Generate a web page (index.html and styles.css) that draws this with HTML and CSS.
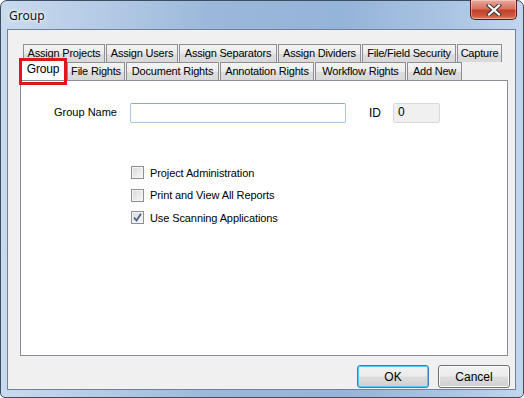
FILE: index.html
```html
<!DOCTYPE html>
<html lang="en">
<head>
    <meta charset="UTF-8">
    <title>Group</title>
    <link rel="stylesheet" href="styles.css">
</head>
<body>
    <!-- Dialog window -->
    <div class="window">
        <div class="titlebar">
            <span class="title">Group</span>
            <div class="close-btn">
                <svg width="16" height="12" viewBox="0 0 16 12">
                    <path d="M3 1.5 L13 10.5 M13 1.5 L3 10.5" stroke="#3b3b3b" stroke-width="4.2" stroke-linecap="square"/>
                    <path d="M3 1.5 L13 10.5 M13 1.5 L3 10.5" stroke="#ffffff" stroke-width="2.2" stroke-linecap="square"/>
                </svg>
            </div>
        </div>

        <div class="client">
            <!-- Tab control -->
            <div class="tab-control">
                <div class="tab-row back-row">
                    <span class="tab tab-projects">Assign Projects</span>
                    <span class="tab tab-users">Assign Users</span>
                    <span class="tab tab-separators">Assign Separators</span>
                    <span class="tab tab-dividers">Assign Dividers</span>
                    <span class="tab tab-security">File/Field Security</span>
                    <span class="tab tab-capture">Capture</span>
                </div>
                <div class="tab-row front-row">
                    <span class="tab selected">Group<span class="highlight"></span></span>
                    <span class="tab tab-file">File Rights</span>
                    <span class="tab tab-document">Document Rights</span>
                    <span class="tab tab-annotation">Annotation Rights</span>
                    <span class="tab tab-workflow">Workflow Rights</span>
                    <span class="tab tab-new">Add New</span>
                </div>

                <div class="tab-panel">
                    <div class="field-row">
                        <label class="field-label">Group Name</label>
                        <div class="text-box"></div>
                        <label class="id-label">ID</label>
                        <div class="id-box">0</div>
                    </div>

                    <div class="check-list">
                        <div class="check-item">
                            <span class="check-box"></span>
                            <span>Project Administration</span>
                        </div>
                        <div class="check-item">
                            <span class="check-box"></span>
                            <span>Print and View All Reports</span>
                        </div>
                        <div class="check-item">
                            <span class="check-box checked">
                                <svg width="9" height="9" viewBox="0 0 9 9">
                                    <path d="M1 4.5 L3.5 7.5 L8 0.8" fill="none" stroke="#4a5f88" stroke-width="1.8"/>
                                </svg>
                            </span>
                            <span>Use Scanning Applications</span>
                        </div>
                    </div>
                </div>
            </div>

            <!-- Dialog buttons -->
            <div class="button-bar">
                <button class="dlg-btn default">OK</button>
                <button class="dlg-btn">Cancel</button>
            </div>
        </div>
    </div>
</body>
</html>
```

FILE: styles.css
```css
/* Basic reset */
* {
    margin: 0;
    padding: 0;
    box-sizing: border-box;
}

body {
    background-color: #ffffff;
    font-family: 'Liberation Sans', Arial, sans-serif;
    font-size: 11px;
    color: #000;
}

/* Window frame */
.window {
    width: 524px;
    height: 398px;
    border: 1px solid #3d4e63;
    border-radius: 7px 7px 5px 5px;
    background: linear-gradient(to right, #c8daee 0%, #b6cce6 18%, #9bb8db 40%, #95b4d9 65%, #a9c3e3 85%, #c2d6ee 100%);
    padding: 0 7px 7px 6px;
    display: flex;
    flex-direction: column;
}

.titlebar {
    height: 28px;
    display: flex;
    align-items: flex-start;
    justify-content: space-between;
}

.title {
    font-family: 'Noto Sans', 'Open Sans', sans-serif;
    font-size: 12px;
    color: #111;
    padding: 6px 0 0 2px;
    text-shadow: 0 0 6px #ffffff, 0 0 3px #ffffff;
}

.close-btn {
    width: 47px;
    height: 20px;
    margin-top: -1px;
    margin-right: -1px;
    border: 1px solid #5a1b15;
    border-top: none;
    border-radius: 0 0 5px 5px;
    background: linear-gradient(to bottom, #e9a99c 0%, #d7725f 45%, #c4412a 55%, #cf5a3e 85%, #e0866a 100%);
    display: flex;
    justify-content: center;
    align-items: center;
    box-shadow: inset 0 0 0 1px rgba(255, 255, 255, 0.35);
}

/* Client area */
.client {
    flex: 1;
    background-color: #f0f0f0;
    border: 1px solid #6f8299;
    padding: 14px 7px 0 12px;
    display: flex;
    flex-direction: column;
}

.tab-control {
    display: flex;
    flex-direction: column;
}

.tab-row {
    display: flex;
    height: 18px;
}

.back-row {
    padding-left: 3px;
}

.front-row {
    padding-left: 0;
}

.tab {
    position: relative;
    height: 18px;
    line-height: 17px;
    margin-right: 1px;
    border: 1px solid #8c8e94;
    border-bottom: none;
    background: linear-gradient(to bottom, #f4f4f4 0%, #ebebeb 50%, #dddddd 51%, #d9d9d9 100%);
    white-space: nowrap;
    text-align: center;
    letter-spacing: -0.2px;
}

/* tab widths, taken from the original dialog */
.tab-projects { width: 82px; }
.tab-users { width: 72px; }
.tab-separators { width: 98px; }
.tab-dividers { width: 83px; }
.tab-security { width: 94px; }
.tab-capture { width: 45px; }
.tab-file { width: 58px; }
.tab-document { width: 93px; }
.tab-annotation { width: 94px; }
.tab-workflow { width: 91px; }
.tab-new { width: 55px; }

.tab.selected {
    width: 46px;
    height: 21px;
    margin-top: -3px;
    margin-right: 1px;
    background: #ffffff;
    line-height: 19px;
    z-index: 2;
    font-size: 12px;
}

/* red annotation box drawn over the selected tab */
.highlight {
    position: absolute;
    left: -2px;
    top: -2px;
    width: 48px;
    height: 27px;
    border: 3px solid #e2151c;
}

.tab-panel {
    height: 276px;
    background-color: #ffffff;
    border: 1px solid #898c95;
    padding: 22px 0 0 33px;
}

.field-row {
    display: flex;
    align-items: center;
    height: 20px;
}

.field-label {
    width: 76px;
    margin-top: -3px;
}

.text-box {
    width: 216px;
    height: 20px;
    border: 1px solid #a8c6e6;
    border-top-color: #8ba9cc;
    border-radius: 2px;
    background: #ffffff;
}

.id-label {
    margin-left: 23px;
    width: 24px;
    font-size: 12px;
}

.id-box {
    width: 47px;
    height: 20px;
    border: 1px solid #d9d9d9;
    border-radius: 2px;
    background: #f0f0f0;
    padding-left: 4px;
    line-height: 17px;
    font-size: 12px;
}

/* Checkboxes */
.check-list {
    display: flex;
    flex-direction: column;
    gap: 9.5px;
    margin-top: 43px;
    padding-left: 77px;
}

.check-item {
    display: flex;
    align-items: center;
    gap: 6px;
    height: 13px;
    letter-spacing: -0.1px;
}

.check-box {
    width: 13px;
    height: 13px;
    border: 1px solid #8e8f8f;
    background: linear-gradient(135deg, #d9d9d9 0%, #ececec 60%, #f7f7f7 100%);
    box-shadow: inset 0 0 0 1px #f4f4f4;
    display: flex;
    justify-content: center;
    align-items: center;
}

/* Dialog buttons */
.button-bar {
    display: flex;
    justify-content: flex-end;
    gap: 9px;
    margin-top: 9px;
    margin-right: -2px;
}

.dlg-btn {
    width: 72px;
    height: 23px;
    font-family: 'Liberation Sans', Arial, sans-serif;
    font-size: 12px;
    color: #000;
    border: 1px solid #707070;
    border-radius: 3px;
    background: linear-gradient(to bottom, #f2f2f2 0%, #ebebeb 48%, #dddddd 52%, #cfcfcf 100%);
    box-shadow: inset 0 0 0 1px #fbfbfb;
}

.dlg-btn.default {
    border-color: #3c7fb1;
    box-shadow: inset 0 0 0 1px #4dd0f8;
}
```
